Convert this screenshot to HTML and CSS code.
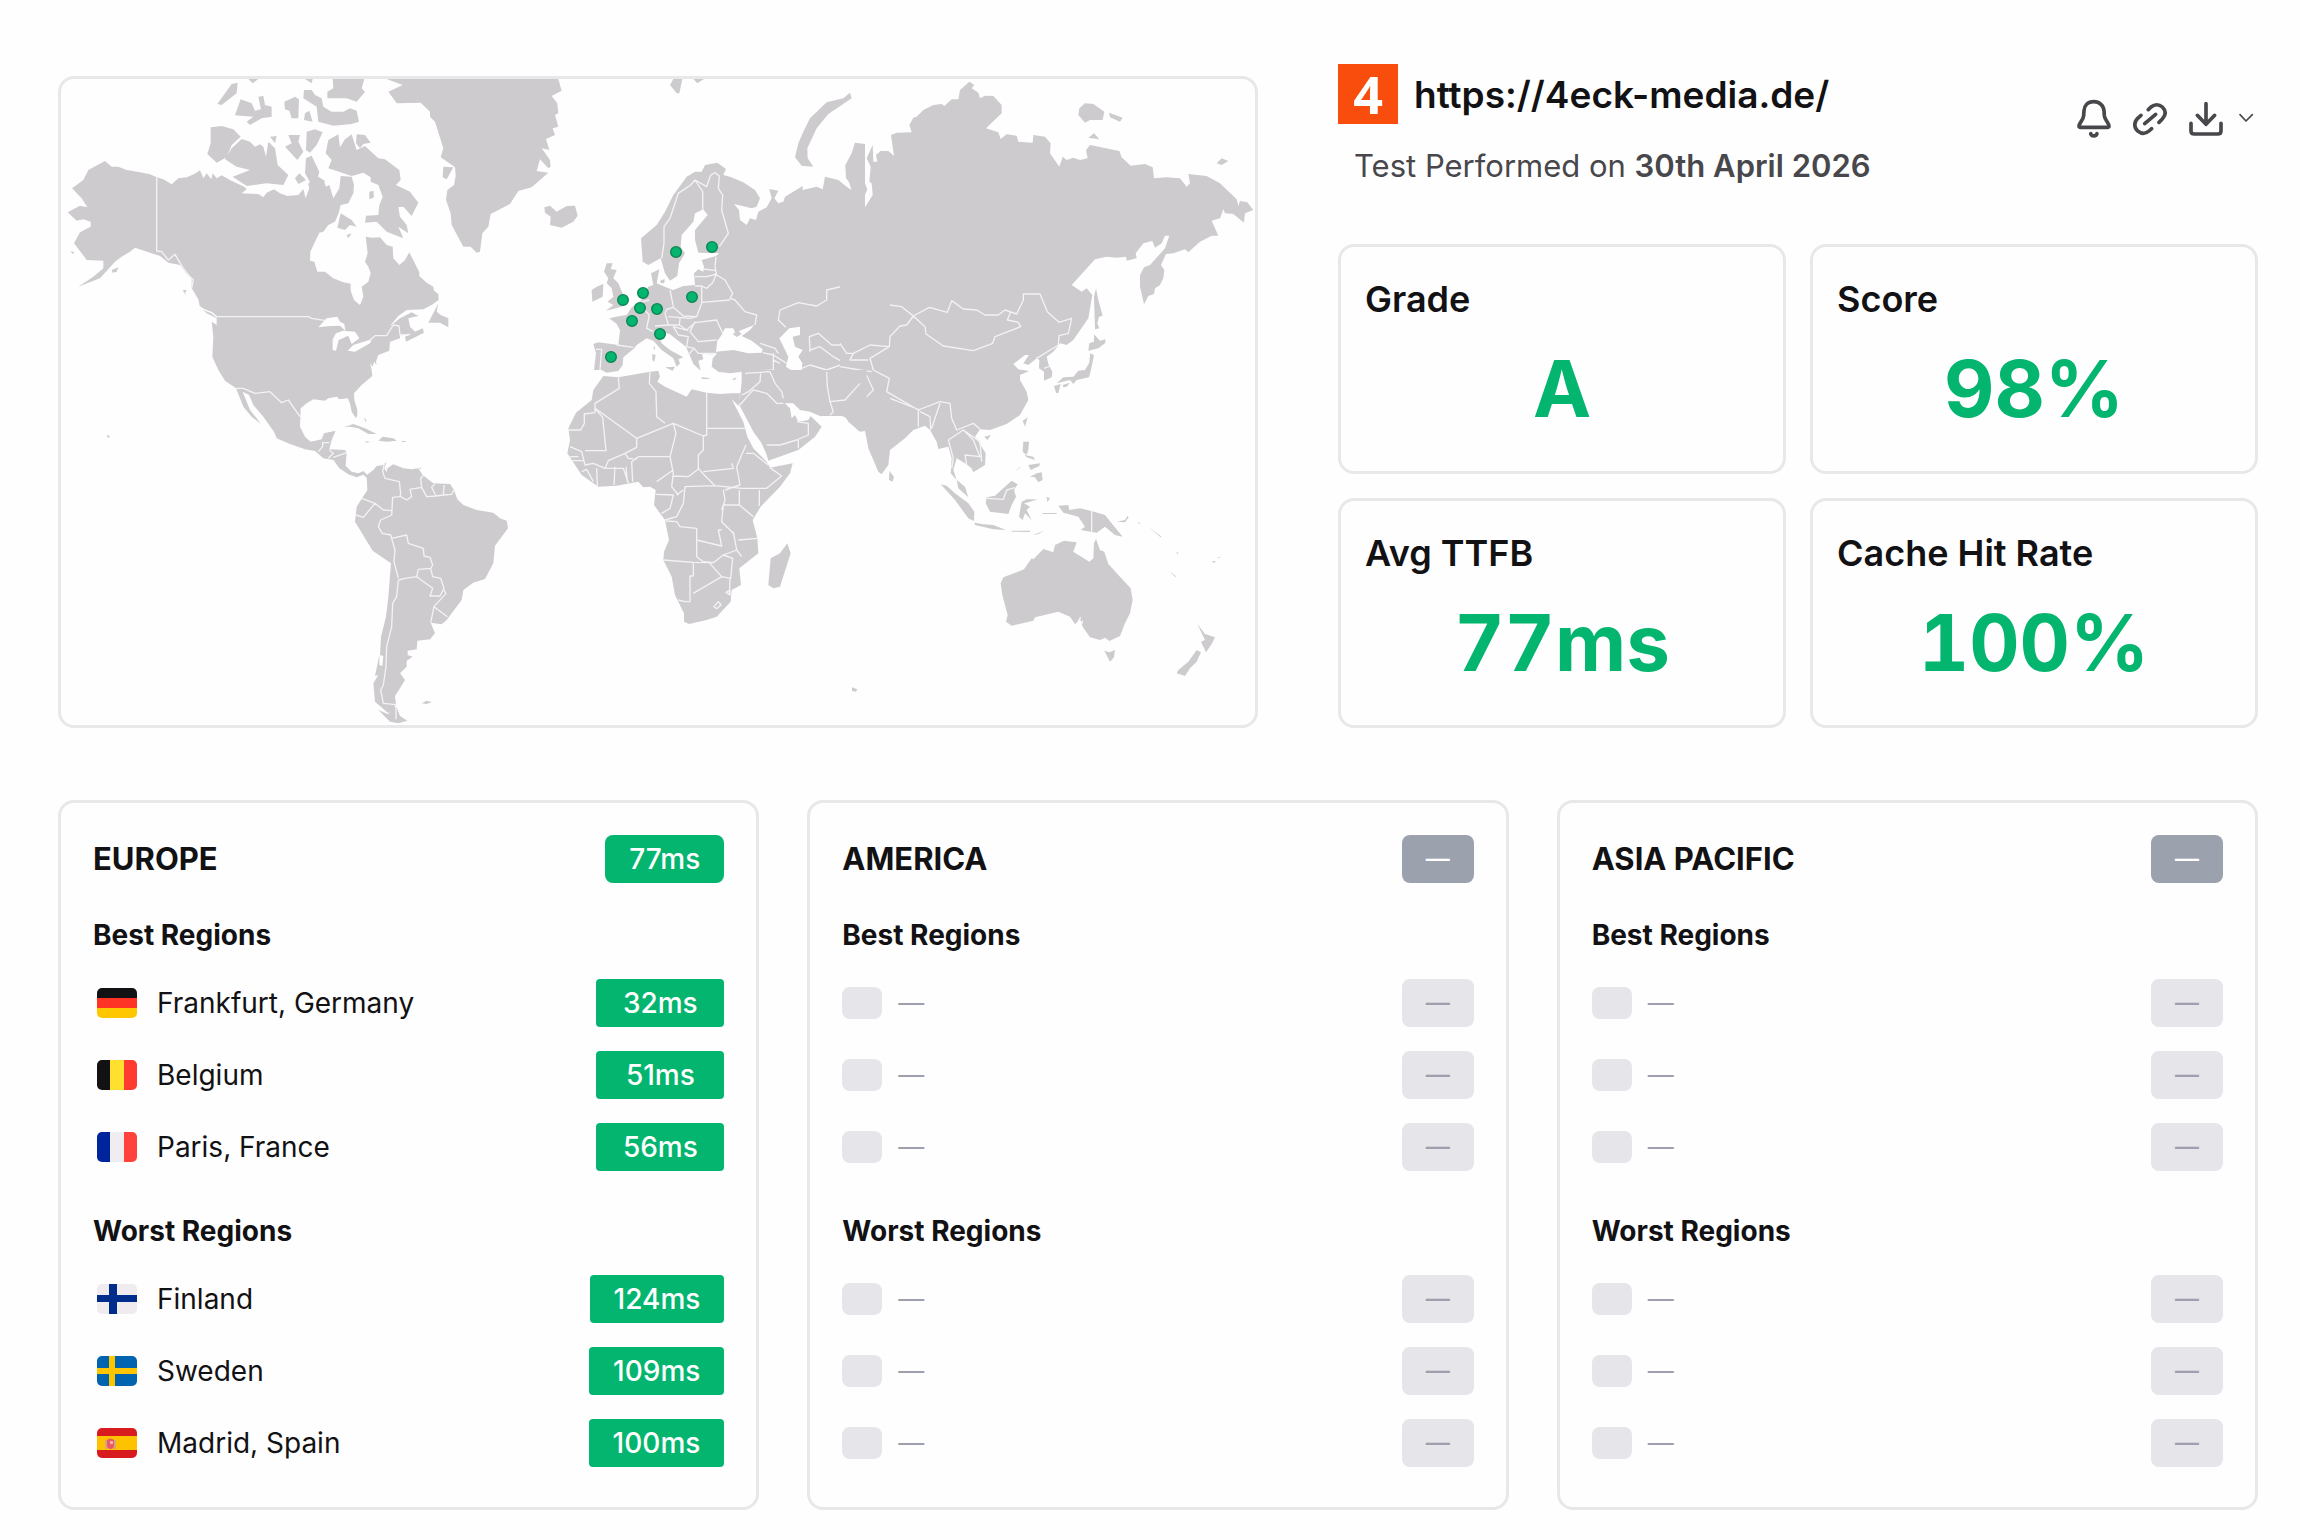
FILE: index.html
```html
<!DOCTYPE html>
<html lang="en">
<head>
<meta charset="utf-8">
<meta name="viewport" content="width=device-width, initial-scale=1">
<title>TTFB test – 4eck-media.de</title>
<link rel="stylesheet" href="styles.css">
</head>
<body>
<main class="page">
  <section class="overview">
    <div class="map-card">
      <svg class="map" viewBox="183 237 3582 1938" preserveAspectRatio="xMidYMid slice" role="img" aria-label="World map with test locations">
        <!-- North and Central America -->
        <g transform="translate(150 210)">
          <path class="land" d="M165,273L185,290 205,290 230,300 262,305 300,313 320,322 340,328 365,343 385,325 410,322 433,312 450,301 460,325 470,310 484,328 488,310 500,325 515,316 540,330 560,340 583,350 590,358 575,370 625,372 640,382 650,368 672,358 690,370 712,378 745,375 760,357 767,385 778,355 775,342 790,320 808,322 820,330 828,350 838,345 850,385 868,355 872,318 905,320 912,345 910,370 895,400 872,405 866,430 855,455 835,465 820,485 808,488 795,515 781,545 780,572 793,575 802,605 825,605 850,625 880,637 902,641 902,662 912,690 930,705 940,680 935,650 955,635 962,610 955,590 945,575 953,550 947,500 965,503 990,502 1010,525 1028,530 1030,565 1048,585 1065,570 1078,547 1108,607 1108,618 1130,638 1150,650 1152,662 1165,672 1166,690 1145,705 1120,718 1070,720 1045,738 1018,770 1050,745 1085,727 1105,738 1075,745 1080,770 1095,785 1118,775 1122,788 1068,815 1065,800 1085,793 1050,795 1050,805 1020,815 1018,842 985,855 978,875 980,885 972,875 968,890 960,880 965,900 967,918 935,945 912,970 913,990 922,1020 922,1035 918,1045 905,1025 900,1000 893,985 868,988 860,980 835,985 825,992 790,988 770,1000 752,1015 750,1070 765,1100 782,1115 815,1108 822,1090 857,1082 845,1110 838,1138 885,1140 890,1148 887,1187 905,1205 925,1210 940,1203 952,1215 955,1228 940,1214 920,1222 895,1213 868,1195 850,1170 820,1165 795,1143 765,1138 720,1122 680,1105 672,1085 640,1040 610,1005 597,975 578,965 600,1020 620,1045 632,1062 605,1040 580,1010 570,985 558,955 525,932 505,900 487,860 490,800 485,755 500,765 500,745 470,730 450,712 445,688 425,655 425,625 410,612 390,585 355,578 330,558 300,548 255,533 240,545 215,560 195,575 150,625 85,650 130,620 160,595 160,572 110,570 95,550 72,520 90,487 122,470 122,455 100,448 80,452 53,427 90,407 112,412 95,385 66,355 100,330 115,300Z"/>
          <path class="land" d="M482,172L515,168 550,178 572,200 545,225 530,262 500,278 472,252 482,220Z M575,207L600,215 615,230 630,223 640,230 648,260 655,215 675,235 683,285 715,315 700,345 650,340 590,348 548,320 600,300 560,290 525,268 545,235Z M545,42L563,38 560,70 515,105 502,102Z M572,88L605,100 615,122 633,118 625,80 640,78 645,105 665,110 665,140 635,145 600,165 590,155 610,140 555,136Z M703,95L735,80 747,88 745,145 725,145 718,122 705,118Z M765,130L778,122 788,155 762,150Z M762,60L785,60 795,75 815,85 820,110 845,125 880,125 900,115 920,122 927,155 905,162 850,167 805,155 800,110 760,85Z M848,27H943L935,55 945,66 920,95 890,85 832,85 832,65 850,55Z M595,27H625L608,40Z M765,27H788L785,40Z M715,195L750,195 745,215 760,245 742,270 705,230 725,220Z M770,185L795,178 818,187 800,225 780,248 768,240Z M660,200L680,198 675,220Z M765,310L768,265 785,257 808,305 803,325 825,332 820,345 785,345Z M735,325L748,310 768,330 745,342Z"/>
          <path class="land" d="M835,210L865,193 870,232 885,208 905,193 920,240 945,228 985,265 1005,268 1048,300 1052,330 1038,345 1080,365 1105,398 1085,438 1060,410 1045,412 1050,440 1070,465 1075,490 1045,470 1060,505 1010,485 980,455 945,458 948,437 985,435 988,405 998,380 985,345 962,335 962,322 940,308 905,318 835,295 845,270 827,250Z M920,193L945,195 962,218 940,222 930,235 918,220Z M958,365L970,362 972,382 958,388Z M872,430L905,450 920,470 900,465 885,480 862,473Z M890,495L905,490 895,505Z M1165,700L1160,725 1172,735 1195,745 1195,772 1170,758 1135,758Z M398,660L410,660 405,670 412,685Z M185,600L205,592 200,605 188,608Z M60,545L73,545 70,552Z M882,1072L910,1062 945,1075 980,1092 955,1092 925,1075 900,1070Z M998,1100L1030,1105 1040,1112 1010,1115 985,1112Z M945,1113L960,1115 950,1118Z M1055,1113H1067V1116H1055Z M942,1040L950,1052 946,1055Z M170,1094L180,1099 174,1105Z"/>
          <path class="sea" d="M805,772L830,745 862,740 870,755 883,762 886,782 870,767 840,768Z M858,790L880,782 915,785 928,805 905,822 895,797 866,810 858,842 848,840 848,808Z M893,842L910,825 965,808 960,820 915,845Z"/>
          <path class="sea-line" d="M442,706L460,718 485,728 502,742"/>
          <path class="border" d="M320,322V543L335,545 355,570 375,553 400,595 415,615 430,630 425,655 M503,740H775L785,745 828,752 M958,812L975,797 1010,797 1030,765 1047,768 1050,795 1080,793 M558,955L580,955 615,970 660,965 695,998 715,990 750,1040 M805,1145L818,1130 818,1118 838,1118 M835,1165L850,1150 838,1140 M850,1162L890,1148"/>
        </g>
        <!-- South America -->
        <g transform="translate(150 1200)">
          <path class="land" d="M950,225L970,210 980,198 1000,195 1010,185 1003,205 1010,217 1012,205 1030,193 1060,205 1085,208 1105,205 1118,225 1150,250 1200,252 1212,270 1222,298 1240,315 1280,330 1330,338 1350,355 1370,362 1374,385 1335,437 1330,490 1305,537 1270,548 1240,570 1235,600 1190,660 1175,673 1142,668 1155,700 1140,718 1102,722 1100,748 1073,752 1073,765 1088,770 1070,782 1070,800 1050,820 1065,840 1050,865 1035,888 1038,915 1015,940 975,905 970,850 985,825 975,828 988,765 988,795 997,798 1000,768 990,765 993,710 1008,650 1015,590 1023,490 968,452 915,365 920,320 952,270Z M985,930L1015,943 1030,920 1040,922 1050,948 1072,962 1045,970 1020,965Z M1115,910L1130,902 1145,906 1130,912Z M1107,205L1114,201 1112,207Z"/>
          <path class="border" d="M1003,190L998,215 1005,235 1048,245 1052,280 1050,290 1028,292 1025,345 992,360 985,380 997,400 1022,405 1035,450 1032,485 1045,535 M1052,290L1070,300 1085,290 1080,268 1115,262 1112,235 1122,225 M1115,262L1130,290 1158,288 1145,262 1155,252 M1158,288L1180,285 1182,255 M1180,285L1205,283 1212,270 M935,295L975,310 1000,330 1025,332 M975,310L940,352 918,345 M1025,415L1070,405 1075,430 1120,445 1122,468 1140,472 1148,495 1142,505 1105,508 1100,530 1065,535 1045,540 M1100,530L1148,565 1140,588 1170,588 1182,565 1172,535 1148,530 1142,505 M1182,570L1188,580 1152,620 1192,650 M1152,620L1142,668 M1045,540L1040,590 1028,610 1025,680 1010,740 1008,800 1000,855 992,870 1000,910 1038,914 M1038,920V958"/>
        </g>
        <!-- Greenland, Europe and western Asia -->
        <g transform="translate(1320 210)">
          <path class="land" d="M-160,27L-112,45 -155,65 -130,100 -58,98 -30,125 -30,140 -15,155 10,235 2,262 45,292 47,318 42,345 22,360 18,390 32,430 35,465 70,530 92,530 110,548 120,545 127,490 145,470 152,432 210,402 235,363 275,352 325,308 290,303 300,268 325,295 332,290 330,270 305,235 328,240 318,207 345,195 338,175 355,170 345,135 355,130 352,100 335,78 365,62 355,27Z M10,290L40,292 20,328 8,322Z M313,412L330,407 350,425 380,408 405,407 413,437 400,455 365,473 330,465 332,440 315,428Z M690,45L700,27H727L718,70 710,70Z M760,27H792L772,40Z M1230,68L1235,85 1165,132 1130,175 1102,235 1103,265 1120,290 1085,287 1065,262 1075,220 1090,185 1110,145 1160,97 1210,85Z"/>
          <path class="land" d="M795,285L832,278 858,297 850,315 870,320 910,337 945,360 960,385 950,410 935,415 882,402 897,420 900,450 920,465 930,445 948,450 955,425 980,412 995,385 988,357 1015,362 1003,385 1015,400 1030,395 1035,380 1088,348 1088,360 1130,350 1148,358 1155,320 1195,330 1235,362 1225,330 1217,290 1240,240 1245,218 1275,222V1000H895L910,930 905,905 870,910 835,905 815,890 818,865 830,852 810,853 785,850 790,868 775,872 782,902 760,882 750,858 738,830 705,805 690,793 665,785 655,795 665,820 690,840 730,862 715,868 720,880 710,890 700,865 665,840 640,812 620,805 590,825 583,835 550,862 548,885 535,903 500,908 485,900 462,900 468,850 460,822 475,817 535,825 540,780 530,762 508,745 540,738 560,735 575,712 605,690 625,650 640,645 633,610 658,598 650,640 685,655 700,660 730,648 765,645 762,610 775,598 790,605 792,590 785,570 828,558 838,550 775,548 765,510 765,480 803,435 790,418 765,430 760,455 725,495 722,530 735,550 717,580 712,618 690,632 675,610 662,565 625,585 608,575 603,505 650,465 675,425 700,375 740,320 765,305 785,305Z M675,892L705,890 698,902Z M637,852L647,855 643,875 637,870Z M640,830H645L643,842Z M785,922L808,924V927H785Z M875,928L890,922 885,930Z M663,630L675,628 672,640 660,638Z"/>
          <path class="land" d="M500,580L518,580 512,597 530,600 520,625 535,640 552,680 560,690 545,710 498,722 520,705 503,695 520,680 515,655 500,640 505,625 492,605Z M470,650L490,642 488,680 457,695 455,660Z"/>
          <path class="sea" d="M855,775L880,775 885,788 905,780 942,765 930,780 905,798 935,812 968,838 965,848 925,850 880,840 828,845 832,812 845,795Z M1048,775L1080,770 1080,795 1058,800 1065,830 1088,840 1075,860 1087,880 1085,900 1060,905 1038,890 1045,860 1018,805Z"/>
          <path class="land" d="M878,792L895,782 905,792 890,801Z"/>
          <path class="border" d="M665,565L672,520 672,470 690,445 715,370 752,345 765,330 788,365V418 M765,330L800,350 812,315 825,308 838,318 835,355 848,375 845,420 865,490 838,530 M765,620H800L830,612 M765,648H785L800,655 818,638 828,615 M828,560L825,590 830,615 855,630 878,670 870,685 885,690 915,725 950,735 945,765 M790,597L828,602 M690,660L700,710 M675,730L680,718 700,712 730,738 770,740 785,700 785,650 M785,697L870,690 M600,705L628,735 620,775 640,785 M590,700L628,690 M675,730L685,765 645,768 M685,765L718,765 720,745 M685,740L750,745 770,740 M718,765L740,780 765,758 830,750 848,790 M765,755L750,785 775,815 830,810 M745,782L700,770 715,795 745,800 740,830 762,835 775,850 830,850 M762,835L745,855 M530,825L580,832 M468,838L485,838 480,900 M1038,772L1015,750 1020,720 1075,698 1130,708 1160,690 1160,660 1245,640 1280,655 1315,655 1350,705 1420,738 M1110,845L1108,800 1135,790 1175,825 1205,825 1220,858 1250,850 M1085,895L1110,885 1160,900 1215,880 1225,850 M1110,840L1140,830 1180,860 1215,880 M960,820L1005,835 1015,850 M968,848L1000,855 1040,880 M1000,850L1000,900 905,905 M1000,870L1020,880"/>
        </g>
        <!-- Northern and eastern Asia -->
        <g transform="translate(2520 210)">
          <path class="land" d="M0,340L38,362 35,345 18,325 16,285 35,250 45,218 72,225 68,268 75,340 82,358 60,410 75,412 98,375 95,340 88,335 92,290 80,265 98,225 100,275 112,275 108,255 122,243 145,243 162,258 153,195 170,188 215,187 208,165 220,143 230,140 250,120 280,105 305,102 313,108 335,88 355,88 360,60 388,35 403,45 395,55 415,68 420,85 435,77 460,78 485,105 485,130 438,175 475,187 482,207 500,193 530,197 535,215 578,218 580,195 615,200 632,220 630,250 658,290 668,260 680,270 700,263 720,270 743,265 738,240 750,225 838,243 845,262 872,287 915,282 938,292 942,325 980,322 1020,325 1040,350 1050,340 1045,312 1100,318 1140,340 1190,388 1195,408 1200,393 1222,397 1240,420 1215,430 1212,458 1180,432 1155,430 1150,418 1140,445 1115,452 1135,497 1115,497 1080,515 1045,547 1035,538 1000,550 978,552 963,585 973,600 970,625 960,645 945,655 942,672 925,678 912,703 900,650 900,615 912,592 930,585 975,535 988,497 975,497 965,520 945,533 937,513 910,520 887,550 890,565 860,572 858,560 830,563 800,560 765,568 695,645 725,665 740,655 757,675 745,745 700,810 680,825 660,820 640,845 620,860 625,882 637,905 635,922 612,932 612,905 597,895 598,870 590,865 565,885 550,880 567,855 555,855 520,882 535,898 567,903 540,915 540,930 560,965 565,990 540,1035 500,1062 450,1080 420,1078 405,1100 425,1130 437,1150 435,1185 400,1207 395,1195 375,1180 350,1165 340,1200 350,1230 375,1250 385,1282 355,1255 350,1230 332,1210 335,1165 325,1130 295,1137 290,1115 270,1080 255,1067 220,1080 195,1105 150,1140 145,1185 125,1213 115,1205 85,1135 75,1082 55,1082 20,1045 0,1035Z"/>
          <path class="land" d="M718,115L735,100 760,102 793,125 788,150 750,150 735,158 715,135Z M807,128L848,143 840,155 810,142Z M745,203L762,190 778,208Z M1130,280L1145,265 1165,273 1145,285Z M768,655L775,690 788,737 777,740 772,760 778,775 765,778 762,680Z M762,793L780,812 797,808 795,820 775,835 745,842 748,820 762,815Z M750,850L762,855 755,890 747,922 710,930 700,942 690,930 650,940 670,922 700,920 715,902 735,900 748,878Z M642,948L662,942 655,970 648,968Z M668,945L690,938 680,950 670,952Z"/>
          <path class="border" d="M150,705L185,710 220,738 268,712 322,727 335,692 370,717 410,720 435,735 475,735 495,720 530,732 550,690 550,672 600,672 622,725 657,757 695,745 685,790 657,797 655,825 590,865 M220,738L255,770 258,792 310,828 400,842 458,820 465,800 542,770 535,757 502,750 512,725 M220,738L200,765 180,768 150,800 148,830 90,865 100,900 148,925 140,965 235,1020 300,995 330,1000 335,1045 350,1080 400,1060 420,1078 M148,830L90,825 40,850 30,870 85,870 M0,820L20,850 40,850 M0,890L60,900 95,905 M60,900L50,950 0,990 M75,905L100,960 50,1010 45,1045 M150,985L240,1020 M235,1020L235,1070 M240,1025L270,1040 272,1080 M300,1000L275,1075 M325,1110L370,1080 400,1110 420,1160 375,1155 380,1185 M325,1110L340,1165 335,1195 M370,1080L420,1115 425,1175 M612,895L630,888"/>
        </g>
        <!-- Africa, the Middle East and the Indian Ocean -->
        <g transform="translate(1620 1020)">
          <path class="land" d="M605,90V125L598,195 640,275 665,310 680,345 685,362 775,330 825,290 845,260 812,228 805,240 775,245 765,225 755,235 750,205 730,185 735,172 750,180 780,210 810,215 840,228 915,228 925,245 960,275 980,272V90Z M190,108L235,112 330,95 355,92 360,110 352,125 375,140 440,170 455,148 500,158 540,162 575,160 600,160 596,198 575,178 610,245 622,290 640,325 680,365 690,383 758,370 750,400 720,440 662,500 638,540 652,595 655,640 598,685 603,735 575,750 572,785 530,830 500,840 447,852 432,845 432,820 405,765 395,710 370,660 372,635 387,600 375,540 342,495 347,450 330,440 310,442 295,425 230,437 175,440 125,405 82,340 90,300 85,265 108,218 155,180 160,150Z M742,610L752,640 720,740 700,745 685,735 692,655 720,640Z M1048,393L1062,410 1058,425 1047,420Z"/>
          <path class="border" d="M235,112L238,145 165,190 165,218 133,222V250L122,270H85 M165,205L290,295 400,250 490,288 500,285V158 M330,95L328,130 348,155 350,230 375,250 M500,265H618 M188,232L198,332H135 M188,232L165,205 M290,295V322L255,340 205,362 195,385 M490,288V330L475,345 475,385 490,402 525,437 M400,250L408,280 390,350 295,350 275,365 278,425 M255,340L265,355 290,358 M390,350L400,400 395,440 415,465 M400,408L445,410 478,385 M490,395L580,385 575,370 M618,315L605,345 590,380 600,435 M618,340L640,340 685,375 M690,383L725,408 680,445 605,445 525,437 435,440 430,490 410,530 375,540 M600,435L555,450 M658,450V498 M598,450L598,495 640,530 M598,495H550L545,545 580,580 585,600 M550,450L555,480 545,510 M545,570H535L545,618 470,600 M470,600V565L420,560 410,545 378,543 M470,600V650L490,665 520,668 M370,660L460,667 520,668 550,645 590,630 M595,600L652,595 M580,575L590,630 605,650 M460,670V708H450V785L435,785 415,780 M460,760L545,710 505,665 M545,710L572,715 578,655 550,645 M570,715L568,765 M90,320L125,335 135,375 160,370 195,385H250L265,430 M90,350H115 M92,362H130 M170,385L172,438 M225,380L222,435 M258,380L262,425 M125,395L140,388 160,425 M347,463L400,465 390,505 365,520 M410,465L430,450 M350,425L400,390 M522,800L535,785 543,795 530,806Z M558,757L570,750 570,765Z M605,165L625,155 660,125 662,100 M600,195L630,160 640,150 680,160 710,190H730 M690,95L705,130 725,155 730,175 M680,315L720,315 770,300 805,285 805,250 770,245 M775,300V325 M615,100L690,95 M860,95L862,140 870,185 880,215 870,225 M870,185L915,180 960,130"/>
        </g>
        <!-- South-East Asia and Oceania -->
        <g transform="translate(2520 1020)">
          <path class="land" d="M302,433L320,437 345,460 385,490 403,515 402,543 385,535 345,480Z M403,548L430,553 460,555 498,570 460,568 405,555Z M515,422L533,433 522,450 528,470 515,495 505,522 450,515 437,490 440,472 465,467Z M545,485L560,478 592,478 570,485 552,490 570,500 560,510 575,540 555,520 548,540 537,530Z M550,305L567,305 565,330 560,345 548,335Z M553,345L580,350 585,360 560,352Z M565,375L600,370 598,378 572,390Z M570,410L590,400 605,397 608,420 595,427 585,412Z M548,242L563,232 555,260Z M433,290L453,285 442,300Z M655,497L685,495 688,510 720,505 755,513 795,525 815,550 848,590 825,585 795,560 770,578 722,570 735,560 715,530 670,518Z M830,545L855,540 862,528 866,532 855,547Z M620,470L630,475 622,487Z M607,519H650V522H607Z M580,585L612,572 595,583Z M515,572L570,572 570,576 515,575Z M890,542L902,552 898,552Z M925,562L965,590 962,592Z M987,692L1010,710 1005,710Z M1010,637H1014V641H1010Z M1115,663L1128,664 1122,669Z M1128,655L1142,650 1140,653Z M522,398L540,380 541,382Z M36,1042L52,1048 48,1055 36,1053Z"/>
          <path class="land" d="M610,627L640,637 645,615 672,602 710,607 700,635 748,665 760,655 762,610 768,597 780,630 793,635 805,672 835,705 872,745 878,780 870,820 855,850 840,888 808,903 795,893 780,900 750,892 728,860 722,840 705,852 690,830 655,815 585,832 580,842 515,857 498,845 503,825 487,765 482,730 490,712 552,688 575,655 580,658Z M793,932L808,937 825,930 822,952 810,965Z M1072,852L1095,882 1125,892 1115,912 1098,937 1083,905 1095,900Z M1070,930L1083,937 1070,965 1050,985 1035,1008 1010,1000 1015,990 1045,965Z"/>
          <path class="sea-line" d="M707,858L722,832 M722,858L728,842"/>
          <path class="border" d="M755,513V575 M440,475L490,478 500,450 525,443"/>
        </g>
        <!-- Test locations -->
        <g class="pins" transform="translate(1320 210)">
          <circle cx="708" cy="546" r="16"/><circle cx="816" cy="531" r="16"/><circle cx="756" cy="681" r="16"/>
          <circle cx="609" cy="669" r="16"/><circle cx="549" cy="690" r="16"/><circle cx="600" cy="714" r="16"/>
          <circle cx="651" cy="717" r="16"/><circle cx="576" cy="753" r="16"/><circle cx="660" cy="792" r="16"/>
          <circle cx="513" cy="861" r="16"/>
        </g>
      </svg>
    </div>

    <div class="summary">
      <header class="summary-head">
        <div class="site">
          <div class="site-name">
            <span class="logo">4</span>
            <h1 class="site-url">https://4eck-media.de/</h1>
          </div>
          <p class="site-date">Test Performed on <strong>30th April 2026</strong></p>
        </div>
        <div class="actions">
          <button class="icon-button" type="button" aria-label="Notify me">
            <svg viewBox="102 81 120 120"><path d="M161,92C143,92 133,104 132,119L131,134C130,148 117,156 117,165Q117,169 122,169H202Q207,169 207,165C207,156 195,148 193,134L192,119C191,104 179,92 161,92Z"/><path d="M152,188C154,197 169,197 171,188"/></svg>
          </button>
          <button class="icon-button" type="button" aria-label="Copy link">
            <svg viewBox="270 81 120 120"><path d="M303,133L293,142C281,155 282,170 293,180C305,189 318,188 327,180L335,173"/><path d="M325,116L333,108C344,99 357,99 367,108C378,119 378,132 367,144L357,154"/><path d="M314,158L347,130"/></svg>
          </button>
          <div class="split">
            <button class="icon-button" type="button" aria-label="Download">
              <svg viewBox="438 81 120 120"><path d="M498,98V160M472,133L498,160 524,133M453,157V179Q453,189 463,189H533Q543,189 543,179V157"/></svg>
            </button>
            <button class="icon-button small" type="button" aria-label="Download options">
              <svg viewBox="588 114 60 60"><path d="M600,134L618,153 637,134"/></svg>
            </button>
          </div>
        </div>
      </header>
      <dl class="stats">
        <div class="stat"><dt>Grade</dt><dd>A</dd></div>
        <div class="stat"><dt>Score</dt><dd>98%</dd></div>
        <div class="stat"><dt>Avg TTFB</dt><dd>77ms</dd></div>
        <div class="stat"><dt>Cache Hit Rate</dt><dd>100%</dd></div>
      </dl>
    </div>
  </section>

  <section class="regions">
    <article class="region">
      <header class="region-head"><h2>EUROPE</h2><span class="badge total">77ms</span></header>
      <h3>Best Regions</h3>
      <ul class="rows">
        <li><svg class="flag" viewBox="0 0 40 30"><path fill="#121114" d="M0 0h40v10H0z"/><path fill="#ff3325" d="M0 10h40v10H0z"/><path fill="#ffc700" d="M0 20h40v10H0z"/></svg><span class="place">Frankfurt, Germany</span><span class="badge">32ms</span></li>
        <li><svg class="flag" viewBox="0 0 40 30"><path fill="#121114" d="M0 0h14v30H0z"/><path fill="#ffe02e" d="M13 0h14v30H13z"/><path fill="#ff3a30" d="M27 0h13v30H27z"/></svg><span class="place">Belgium</span><span class="badge">51ms</span></li>
        <li><svg class="flag" viewBox="0 0 40 30"><path fill="#00249c" d="M0 0h14v30H0z"/><path fill="#efedf0" d="M13 0h14v30H13z"/><path fill="#ff423c" d="M27 0h13v30H27z"/></svg><span class="place">Paris, France</span><span class="badge">56ms</span></li>
      </ul>
      <h3 class="worst">Worst Regions</h3>
      <ul class="rows">
        <li><svg class="flag" viewBox="0 0 40 30"><path fill="#efebef" d="M0 0h40v30H0z"/><path fill="#002d8c" d="M12 0h8v30h-8zM0 11h40v7H0z"/></svg><span class="place">Finland</span><span class="badge">124ms</span></li>
        <li><svg class="flag" viewBox="0 0 40 30"><path fill="#0064b0" d="M0 0h40v30H0z"/><path fill="#ffc600" d="M12 0h6v30h-6zM0 12h40v6H0z"/></svg><span class="place">Sweden</span><span class="badge">109ms</span></li>
        <li><svg class="flag" viewBox="0 0 40 30"><path fill="#d81b1e" d="M0 0h40v30H0z"/><path fill="#ffc200" d="M0 8h40v14H0z"/><path fill="#d9a47a" d="M8 12h2v9H8zM17 12h2v9h-2z"/><path fill="#ea5a66" d="M10 12q3.500-3 7 0v6q0 3-3.500 3T10 18z"/><path fill="#f6b4a6" d="M13 13h3v3h-3z"/></svg><span class="place">Madrid, Spain</span><span class="badge">100ms</span></li>
      </ul>
    </article>

    <article class="region">
      <header class="region-head"><h2>AMERICA</h2><span class="badge total none">—</span></header>
      <h3>Best Regions</h3>
      <ul class="rows">
        <li><span class="blank"></span><span class="place empty">—</span><span class="badge empty">—</span></li>
        <li><span class="blank"></span><span class="place empty">—</span><span class="badge empty">—</span></li>
        <li><span class="blank"></span><span class="place empty">—</span><span class="badge empty">—</span></li>
      </ul>
      <h3 class="worst">Worst Regions</h3>
      <ul class="rows">
        <li><span class="blank"></span><span class="place empty">—</span><span class="badge empty">—</span></li>
        <li><span class="blank"></span><span class="place empty">—</span><span class="badge empty">—</span></li>
        <li><span class="blank"></span><span class="place empty">—</span><span class="badge empty">—</span></li>
      </ul>
    </article>

    <article class="region">
      <header class="region-head"><h2>ASIA PACIFIC</h2><span class="badge total none">—</span></header>
      <h3>Best Regions</h3>
      <ul class="rows">
        <li><span class="blank"></span><span class="place empty">—</span><span class="badge empty">—</span></li>
        <li><span class="blank"></span><span class="place empty">—</span><span class="badge empty">—</span></li>
        <li><span class="blank"></span><span class="place empty">—</span><span class="badge empty">—</span></li>
      </ul>
      <h3 class="worst">Worst Regions</h3>
      <ul class="rows">
        <li><span class="blank"></span><span class="place empty">—</span><span class="badge empty">—</span></li>
        <li><span class="blank"></span><span class="place empty">—</span><span class="badge empty">—</span></li>
        <li><span class="blank"></span><span class="place empty">—</span><span class="badge empty">—</span></li>
      </ul>
    </article>
  </section>
</main>
</body>
</html>
```
FILE: styles.css
```css
:root {
  --ink: #121114;
  --muted: #48474b;
  --line: #e8e7ea;
  --green: #03b56e;
  --page: #fefefe;
}

* { box-sizing: border-box; }

body {
  margin: 0;
  background: var(--page);
  color: var(--ink);
  font-family: Inter, "Liberation Sans", sans-serif;
}

h1, h2, h3, p, ul, dl, dd { margin: 0; padding: 0; }

.page { padding: 64px 42px 30px 58px; }

/* Overview */
.overview {
  display: grid;
  grid-template-columns: 1200fr 920fr;
  column-gap: 80px;
  align-items: end;
}

.map-card, .stat, .region {
  border: 3px solid var(--line);
  border-radius: 16px;
}

.map-card {
  aspect-ratio: 1200 / 652;
  overflow: hidden;
}

.map { display: block; width: 100%; height: 100%; }
.land { fill: #cdcbce; }
.sea { fill: var(--page); }
.sea-line { fill: none; stroke: var(--page); stroke-width: 4; }
.border { fill: none; stroke: #f3f2f4; stroke-width: 4; stroke-linejoin: round; }
.pins { fill: var(--green); stroke: #0a8351; stroke-width: 4; }

.summary-head {
  display: flex;
  justify-content: space-between;
  align-items: flex-start;
}

.site-name { display: flex; align-items: center; gap: 16px; }

.logo {
  width: 60px;
  height: 60px;
  background: #f84d0c;
  color: #fff;
  font: 700 52px/60px "Open Sans", sans-serif;
  text-align: center;
}

.site-url { padding-top: 2px; font-size: 37px; font-weight: 600; line-height: 58px; }

.site-date {
  margin-top: 22px;
  padding-left: 16px;
  color: var(--muted);
  font-size: 31px;
  line-height: 40px;
}

.site-date strong { font-weight: 600; }

.actions { display: flex; gap: 16px; padding: 34px 2px 0 0; }
.split { display: flex; align-items: center; gap: 10px; }

.icon-button {
  width: 40px;
  height: 40px;
  padding: 0;
  border: 0;
  background: none;
}

.icon-button svg {
  display: block;
  width: 100%;
  fill: none;
  stroke: var(--muted);
  stroke-width: 11;
  stroke-linecap: round;
  stroke-linejoin: round;
}

.icon-button.small { width: 20px; height: 20px; }
.icon-button.small svg { stroke-width: 5; }

.stats {
  display: grid;
  grid-template-columns: 1fr 1fr;
  gap: 24px;
  margin-top: 58px;
}

.stat { padding: 28px 24px 34px; }
.stat dt { font-size: 36px; font-weight: 600; line-height: 48px; }

.stat dd {
  margin-top: 18px;
  color: var(--green);
  font-size: 78px;
  font-weight: 700;
  font-variant-numeric: tabular-nums;
  line-height: 96px;
  text-align: center;
}

/* Regions */
.regions {
  display: grid;
  grid-template-columns: repeat(3, 1fr);
  gap: 48px;
  margin-top: 72px;
}

.region { padding: 32px 32px 40px; }

.region-head { display: flex; justify-content: space-between; align-items: center; }
.region h2 { font-size: 31px; font-weight: 700; line-height: 48px; }
.region h3 { margin: 36px 0 28px; font-size: 28px; font-weight: 700; line-height: 32px; }
.region h3.worst { margin-top: 44px; }

.rows { display: grid; gap: 24px; list-style: none; }
.rows li { display: flex; align-items: center; height: 48px; }

.flag { width: 40px; height: 30px; margin: 0 20px 0 4px; border-radius: 5px; }
.blank { width: 40px; height: 32px; margin-right: 16px; border-radius: 8px; background: #e5e5ea; }
.place { flex: 1; font-size: 28px; line-height: 48px; }

.badge {
  min-width: 128px;
  padding: 0 24px;
  border-radius: 4px;
  background: var(--green);
  color: #fff;
  font-size: 28px;
  font-weight: 500;
  line-height: 48px;
  text-align: center;
}

.badge.total { min-width: 0; border-radius: 8px; }
.badge.none, .badge.empty { min-width: 0; border-radius: 8px; font-size: 24px; }
.badge.none { background: #9ca1ae; }
.badge.empty { background: #e5e5ea; }
.place.empty { font-size: 26px; }
.empty { color: #a09fae; }
```
